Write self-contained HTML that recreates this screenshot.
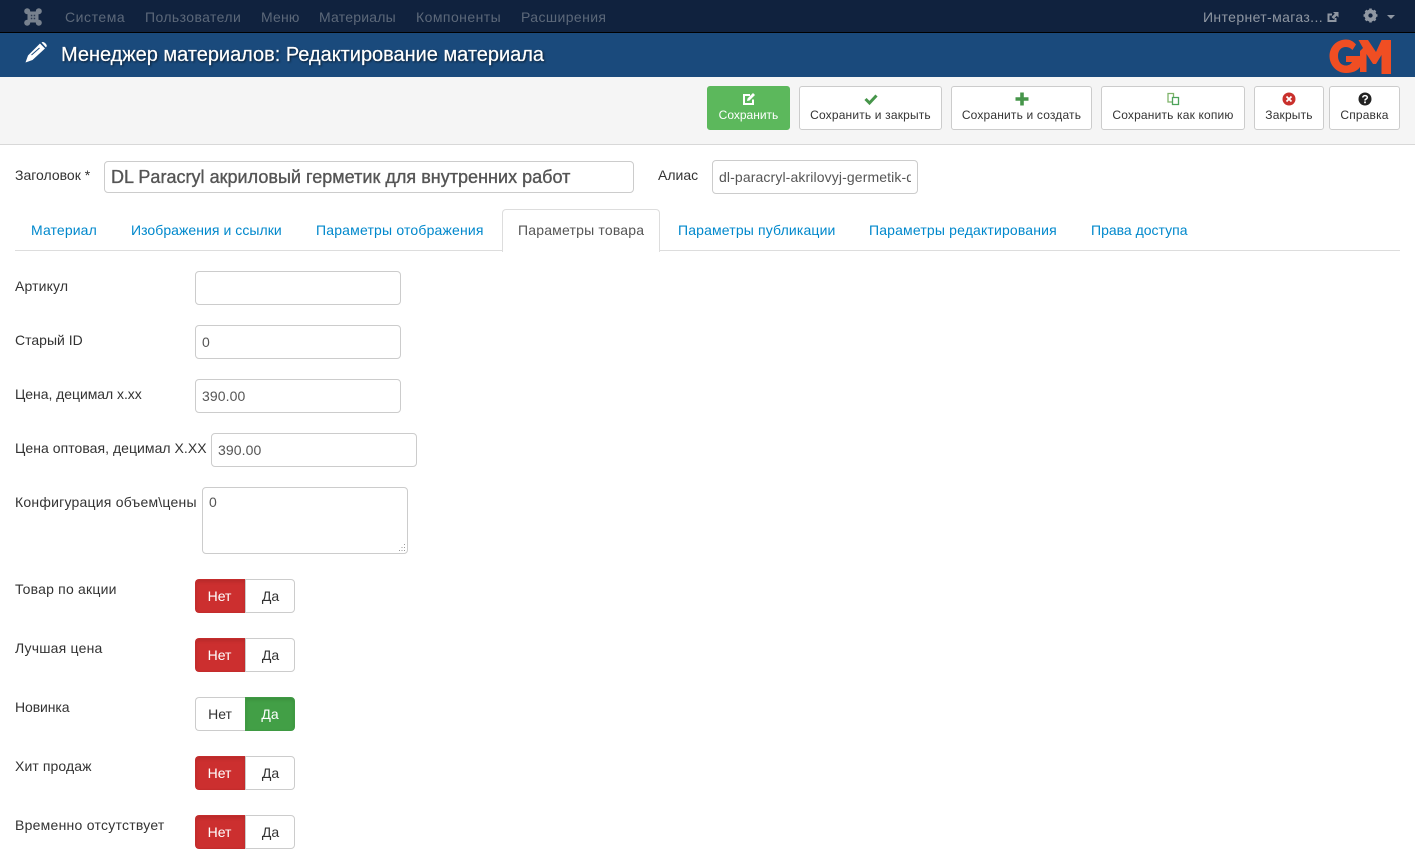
<!DOCTYPE html>
<html lang="ru"><head><meta charset="utf-8"><title>Менеджер материалов</title>
<style>
html,body{margin:0;padding:0;width:1415px;height:855px;overflow:hidden;background:#fff}
body{font-family:"Liberation Sans",sans-serif;font-size:14px;color:#333;position:relative}
.a{position:absolute;white-space:nowrap}
#nav{left:0;top:0;width:1415px;height:32px;background:#10223e;border-bottom:1px solid #000}
.n{top:9px;font-size:14px;line-height:17px;color:#5c6879}
#hdr{left:0;top:33px;width:1415px;height:44px;background:#1a4a7c}
#ttl{left:61px;top:43px;font-size:20px;line-height:24px;color:#fff;letter-spacing:-.02px;-webkit-text-stroke:.2px #fff;text-shadow:1px 1px 2px rgba(0,0,0,.7)}
#tb{left:0;top:77px;width:1415px;height:67px;background:#f5f5f5;border-bottom:1px solid #d8d8d8}
.b{box-sizing:border-box;top:86px;height:44px;background:#fff;border:1px solid #ccc;border-radius:3px;font-size:12px;color:#333;text-align:center;padding-top:21px;line-height:15px;letter-spacing:.17px}
.b svg{position:absolute;top:5px;left:50%;margin-left:-7px}
.b.s{background:#5cb85c;border-color:#5cb85c;color:#fff;letter-spacing:0}
.l{left:15px;font-size:14px;line-height:17px;color:#333}
.i{box-sizing:border-box;border:1px solid #ccc;border-radius:4px;background:#fff;font-size:14px;color:#555;padding:0 6px;overflow:hidden;line-height:32px;height:34px;width:206px}
.t{top:222px;font-size:14px;line-height:17px;color:#08c}
.sw{left:195px;width:100px;height:34px}
.sw span{box-sizing:border-box;position:absolute;top:0;height:34px;line-height:32px;width:50px;text-align:center;font-size:14px;color:#333;background:#fff;border:1px solid #ccc}
.sw .no{left:0;border-radius:4px 0 0 4px;border-right:0}
.sw .yes{left:50px;border-radius:0 4px 4px 0;padding-left:1px}
.sw .red{background:#cc2f2f;border-color:#c42c2c;color:#fff;padding-right:2px;box-shadow:inset 0 2px 3px rgba(0,0,0,.1)}
.sw .grn{background:#429f46;border-color:#3f9a43;color:#fff;padding-left:0;box-shadow:inset 0 2px 3px rgba(0,0,0,.1)}
.sw .no.w{padding-right:1px}
</style></head><body>
<div class="a" id="nav"></div>
<svg class="a" style="left:24px;top:8px" width="18" height="18" viewBox="0 0 18 18"><g fill="#77818e"><circle cx="3.200" cy="3.200" r="3"/><circle cx="14.800" cy="3.200" r="3"/><circle cx="3.200" cy="14.800" r="3"/><circle cx="14.800" cy="14.800" r="3"/><rect x="3.500" y="3.500" width="11" height="11"/></g><path d="M6.800 6.800h1.500v1.500H6.800zM9.700 6.800h1.500v1.500H9.700zM6.800 9.700h1.500v1.500H6.800zM9.700 9.700h1.500v1.500H9.700z" fill="#2c3a50"/></svg>
<div class="a n" style="left:65px;letter-spacing:.55px">Система</div>
<div class="a n" style="left:145px;letter-spacing:.4px">Пользователи</div>
<div class="a n" style="left:261px;letter-spacing:.2px">Меню</div>
<div class="a n" style="left:319px;letter-spacing:.22px">Материалы</div>
<div class="a n" style="left:416px;letter-spacing:.45px">Компоненты</div>
<div class="a n" style="left:521px;letter-spacing:.4px">Расширения</div>
<div class="a n" style="left:1203px;color:#8f97a2;letter-spacing:.37px">Интернет-магаз...</div>
<svg class="a" style="left:1327px;top:11px" width="12" height="12" viewBox="0 0 12 12"><path d="M8.500 7v3H1.500V3.500H5" fill="none" stroke="#8f97a2" stroke-width="2"/><path d="M6 1h5.500v5.500L9.700 4.700 6.500 8 4.500 6 7.800 2.800z" fill="#8f97a2"/></svg>
<svg class="a" style="left:1363px;top:8px" width="15" height="15" viewBox="0 0 14 14"><circle cx="7" cy="7" r="4" fill="none" stroke="#8f97a2" stroke-width="3.200"/><path d="M7 0.500V13.500M0.500 7H13.500M2.400 2.400 11.600 11.600M11.600 2.400 2.400 11.600" stroke="#8f97a2" stroke-width="2.400"/><circle cx="7" cy="7" r="2" fill="#10223e"/></svg>
<svg class="a" style="left:1387px;top:15px" width="8" height="4" viewBox="0 0 8 4"><path d="M0 0H8L4 4Z" fill="#8f97a2"/></svg>

<div class="a" id="hdr"></div>
<svg class="a" style="left:25px;top:42px" width="22" height="21" viewBox="0 0 22 21"><path d="M15 1.500 20 6.500 7.500 18 .5 20.500 3 13.500Z" fill="#fff"/><path d="M16.500 .5 17.500 0C19.200 -.2 21.800 2.200 21.800 4L21 5.500Z" fill="#fff"/><path d="M6.500 13 14.500 6" stroke="#1a4a7c" stroke-width="1"/></svg>
<div class="a" id="ttl">Менеджер материалов: Редактирование материала</div>
<svg class="a" style="left:1329px;top:38px" width="62" height="36" viewBox="0 0 62 36"><path d="M27 6.500C24 3 21 1.500 17 1.500 7.500 1.500 .5 9 .5 18S7.500 35 17 35C24 35 29 32.500 31 29V18H17V24H23C21.500 26.500 19.500 27.500 17 27.500 12 27.500 9 23.500 9 18S12 9 17 9C19.500 9 21.500 10 23.500 12Z" fill="#f04e23"/><path d="M29.500 2H39L47 14 52.500 2H62V36H52.500V17L47 26 44 26 37.500 16V34H31V13L34 10Z" fill="#f04e23"/></svg>

<div class="a" id="tb"></div>
<div class="a b s" style="left:707px;width:83px"><svg width="14" height="14" viewBox="0 0 14 14"><path d="M8 3H2V12H11V7.500" fill="none" stroke="#fff" stroke-width="2"/><path d="M5.500 6.500 11 1l2 2-5.500 5.500-2.500.5z" fill="#fff"/></svg>Сохранить</div>
<div class="a b" style="left:799px;width:143px"><svg width="14" height="14" viewBox="0 0 14 14"><path d="M1.500 7 5.500 11 12.500 3.500" fill="none" stroke="#46954a" stroke-width="3"/></svg>Сохранить и закрыть</div>
<div class="a b" style="left:951px;width:141px"><svg width="14" height="14" viewBox="0 0 14 14"><path d="M7 .5V13.500M.5 7H13.500" stroke="#46954a" stroke-width="3.600"/></svg>Сохранить и создать</div>
<div class="a b" style="left:1101px;width:144px"><svg width="14" height="14" viewBox="0 0 14 14"><path d="M2 1.500H7.500V10H2Z" fill="#fff" stroke="#7fb36a" stroke-width="1.300"/><path d="M6.500 5.500H12.500V12.500H6.500Z" fill="#fff" stroke="#4da25a" stroke-width="1.300"/></svg>Сохранить как копию</div>
<div class="a b" style="left:1254px;width:70px"><svg width="14" height="14" viewBox="0 0 14 14"><circle cx="7" cy="7" r="6.500" fill="#c9302c"/><path d="M4.500 4.500 9.500 9.500M9.500 4.500 4.500 9.500" stroke="#fff" stroke-width="1.800"/></svg>Закрыть</div>
<div class="a b" style="left:1329px;width:71px"><svg width="14" height="14" viewBox="0 0 14 14"><circle cx="7" cy="7" r="6.500" fill="#222"/><path d="M4.800 5.500C4.800 3 9.300 3 9.300 5.500 9.300 7 7 6.800 7 8.500" fill="none" stroke="#fff" stroke-width="1.600"/><rect x="6.100" y="9.500" width="1.800" height="1.700" fill="#fff"/></svg>Справка</div>

<div class="a l" style="top:167px">Заголовок *</div>
<div class="a i" style="left:104px;top:161px;width:530px;height:32px;font-size:18px;line-height:30px;letter-spacing:.02px;-webkit-text-stroke:.35px #555">DL Paracryl акриловый герметик для внутренних работ</div>
<div class="a l" style="left:658px;top:167px">Алиас</div>
<div class="a i" style="left:712px;top:160px;width:206px;height:34px"><div style="width:192px;overflow:hidden;letter-spacing:.12px">dl-paracryl-akrilovyj-germetik-dl-paracryl</div></div>

<div class="a" style="left:15px;top:250px;width:1385px;height:1px;background:#ddd"></div>
<div class="a" style="left:502px;top:209px;width:156px;height:42px;background:#fff;border:1px solid #ddd;border-bottom:0;border-radius:4px 4px 0 0"></div>
<div class="a t" style="left:31px;letter-spacing:.12px">Материал</div>
<div class="a t" style="left:131px;letter-spacing:.05px">Изображения и ссылки</div>
<div class="a t" style="left:316px;letter-spacing:.18px">Параметры отображения</div>
<div class="a t" style="left:518px;color:#555;letter-spacing:.19px">Параметры товара</div>
<div class="a t" style="left:678px;letter-spacing:.15px">Параметры публикации</div>
<div class="a t" style="left:869px;letter-spacing:.16px">Параметры редактирования</div>
<div class="a t" style="left:1091px">Права доступа</div>

<div class="a l" style="top:278px;letter-spacing:.14px">Артикул</div>
<div class="a i" style="left:195px;top:271px"></div>
<div class="a l" style="top:332px">Старый ID</div>
<div class="a i" style="left:195px;top:325px">0</div>
<div class="a l" style="top:386px;letter-spacing:-.05px">Цена, децимал x.xx</div>
<div class="a i" style="left:195px;top:379px;letter-spacing:.1px">390.00</div>
<div class="a l" style="top:440px;letter-spacing:.04px">Цена оптовая, децимал X.XX</div>
<div class="a i" style="left:211px;top:433px;letter-spacing:.1px">390.00</div>
<div class="a l" style="top:494px;letter-spacing:.22px">Конфигурация объем\цены</div>
<div class="a i" style="left:202px;top:487px;height:67px;line-height:28px">0</div>
<svg class="a" style="left:396px;top:543px" width="10" height="9" viewBox="0 0 10 9"><path d="M8 1h1v1H8zM5.500 4h1v1h-1zM8 4h1v1H8zM3 7h1v1H3zM5.500 7h1v1h-1zM8 7h1v1H8z" fill="#999"/></svg>

<div class="a l" style="top:581px;letter-spacing:.2px">Товар по акции</div>
<div class="a sw" style="top:579px"><span class="no red">Нет</span><span class="yes">Да</span></div>
<div class="a l" style="top:640px;letter-spacing:.2px">Лучшая цена</div>
<div class="a sw" style="top:638px"><span class="no red">Нет</span><span class="yes">Да</span></div>
<div class="a l" style="top:699px;letter-spacing:-.1px">Новинка</div>
<div class="a sw" style="top:697px"><span class="no w">Нет</span><span class="yes grn">Да</span></div>
<div class="a l" style="top:758px;letter-spacing:.1px">Хит продаж</div>
<div class="a sw" style="top:756px"><span class="no red">Нет</span><span class="yes">Да</span></div>
<div class="a l" style="top:817px;letter-spacing:.25px">Временно отсутствует</div>
<div class="a sw" style="top:815px"><span class="no red">Нет</span><span class="yes">Да</span></div>
</body></html>
